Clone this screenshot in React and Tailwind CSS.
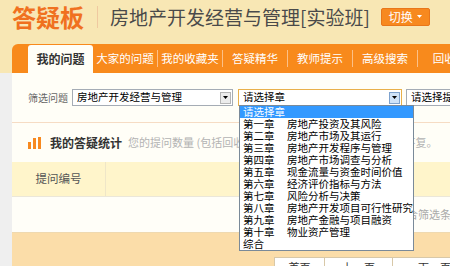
import React from 'react';

const tabs = ['大家的问题', '我的收藏夹', '答疑精华', '教师提示', '高级搜索', '回收站'];

const chapters = [
    ['第一章', '房地产投资及其风险'],
    ['第二章', '房地产市场及其运行'],
    ['第三章', '房地产开发程序与管理'],
    ['第四章', '房地产市场调查与分析'],
    ['第五章', '现金流量与资金时间价值'],
    ['第六章', '经济评价指标与方法'],
    ['第七章', '风险分析与决策'],
    ['第八章', '房地产开发项目可行性研究'],
    ['第九章', '房地产金融与项目融资'],
    ['第十章', '物业资产管理'],
];

const Arrow = ({ active }) => (
    <span
        className={
            'mr-[1px] flex h-[12px] w-[11px] shrink-0 items-center justify-center border ' +
            (active ? 'border-[#7da2ce] bg-[#cfe3f8]' : 'border-[#b5b5b5] bg-[#ececec]')
        }
    >
        <svg width="5" height="3" viewBox="0 0 5 3">
            <path d="M0 0h5L2.5 3z" fill="#000" />
        </svg>
    </span>
);

const App = () => {
    return (
        <div className="h-[266px] w-[450px] overflow-hidden bg-[#efefef] font-['Noto_Sans_CJK_SC',sans-serif]">
            {/* cabecera */}
            <div className="w-[620px] bg-[#f8e7b4]">
                <div className="flex h-[33px] items-center pl-[12px]">
                    <span className="text-[24px] font-bold leading-none text-[#f0711f]">答疑板</span>
                    <span className="ml-[13px] h-[22px] w-px bg-[#efc9a0]" />
                    <span className="ml-[12px] text-[19px] leading-none text-[#4a4a4a]">房地产开发经营与管理[实验班]</span>
                    <button className="ml-[11px] flex h-[18px] w-[49px] items-center justify-center gap-[4px] rounded-[2px] border border-[#e8761a] bg-[#f7891f] text-[12px] leading-none text-white">
                        切换
                        <svg width="5" height="3" viewBox="0 0 5 3">
                            <path d="M0 0h5L2.5 3z" fill="#fff" />
                        </svg>
                    </button>
                </div>
                <div className="h-[11px]" />
                <div className="ml-[12px] flex h-[29px] rounded-tl-[6px] bg-[#f88a1c] pl-[16px]">
                    <div className="mt-[1px] flex w-[65px] items-center justify-center rounded-t-[3px] bg-[#fffef7] text-[12px] font-bold text-[#333]">
                        我的问题
                    </div>
                    {tabs.map((t, i) => (
                        <React.Fragment key={t}>
                            {i > 0 && <span className="h-[17px] w-px self-center bg-[#fcc088]" />}
                            <div className="flex w-[64px] shrink-0 items-center justify-center text-[11.5px] text-white">{t}</div>
                        </React.Fragment>
                    ))}
                </div>
            </div>

            <div className="flex">
                <div className="w-[12px] shrink-0" />
                <div className="w-[600px] shrink-0 bg-[#fffef7]">
                    {/* filtro */}
                    <div className="flex h-[49px] items-start pl-[16px] pt-[16px]">
                        <span className="text-[10px] leading-[17px] text-[#666]">筛选问题</span>
                        <div className="ml-[4px] flex h-[17px] w-[161px] items-center border border-[#a5acb5] bg-white">
                            <span className="flex-1 pl-[4px] text-[10.5px] leading-none text-black">房地产开发经营与管理</span>
                            <Arrow />
                        </div>
                        <div className="relative ml-[5px] flex h-[17px] w-[164px] items-center border border-[#e9b04a] bg-white">
                            <span className="flex-1 pl-[4px] text-[10.5px] leading-none text-black">请选择章</span>
                            <Arrow active />
                            <div className="absolute left-0 top-full z-10 w-[175px] border border-[#7a8a99] bg-white text-[10.5px] leading-[12px] text-black">
                                <div className="h-[12px] bg-[#3399ff] pl-[3px] text-white">请选择章</div>
                                {chapters.map(([c, name]) => (
                                    <div key={c} className="flex h-[12px] whitespace-nowrap pl-[3px]">
                                        <span className="w-[44px] shrink-0">{c}</span>
                                        <span>{name}</span>
                                    </div>
                                ))}
                                <div className="h-[12px] pl-[3px]">综合</div>
                            </div>
                        </div>
                        <div className="ml-[4px] flex h-[17px] w-[120px] items-center border border-[#a5acb5] bg-white">
                            <span className="flex-1 whitespace-nowrap pl-[4px] text-[10.5px] leading-none text-black">请选择提问类型</span>
                        </div>
                    </div>
                    <div className="h-px bg-[#f6dcc4]" />

                    {/* estadisticas */}
                    <div className="flex h-[39px] items-center pl-[16px]">
                        <svg width="14" height="12" viewBox="0 0 14 12">
                            <rect x="0" y="5" width="3" height="7" fill="#f7891f" />
                            <rect x="5" y="1" width="3" height="11" fill="#f7891f" />
                            <rect x="10" y="0" width="3" height="12" fill="#f7891f" />
                        </svg>
                        <span className="ml-[8px] text-[12px] font-bold leading-none text-[#333]">我的答疑统计</span>
                        <span className="ml-[6px] whitespace-nowrap text-[11px] leading-none text-[#b3b3b3]">
                            您的提问数量 (包括回收站中的问题) 共 0 个，其中 0 个已答复。
                        </span>
                    </div>

                    {/* tabla */}
                    <div className="flex h-[34px] bg-[#fff5cb]">
                        <div className="flex w-[94px] items-center justify-center border-r border-[#efe6c8] text-[11.5px] text-[#555]">
                            提问编号
                        </div>
                        <div className="flex-1" />
                    </div>
                    <div className="flex h-[36px] items-center border-t border-[#ebe7d9] bg-[#fffef8] pl-[362px] text-[11px] text-[#aaa]">
                        没有符合筛选条件的问题
                    </div>
                    <div className="h-[40px] border-t border-[#efd9b0] bg-[#fbdda9] pl-[262px] pt-[24px]">
                        <div className="flex text-[11px] leading-[18px] text-[#333]">
                            <span className="h-[20px] w-[51px] border border-[#d8c8a8] bg-white text-center">首页</span>
                            <span className="h-[20px] w-[68px] border border-l-0 border-[#d8c8a8] bg-white text-center">上一页</span>
                            <span className="h-[20px] w-[84px] border border-l-0 border-[#d8c8a8] bg-white text-center">下一页</span>
                        </div>
                    </div>
                </div>
            </div>
        </div>
    );
};

export default App;
